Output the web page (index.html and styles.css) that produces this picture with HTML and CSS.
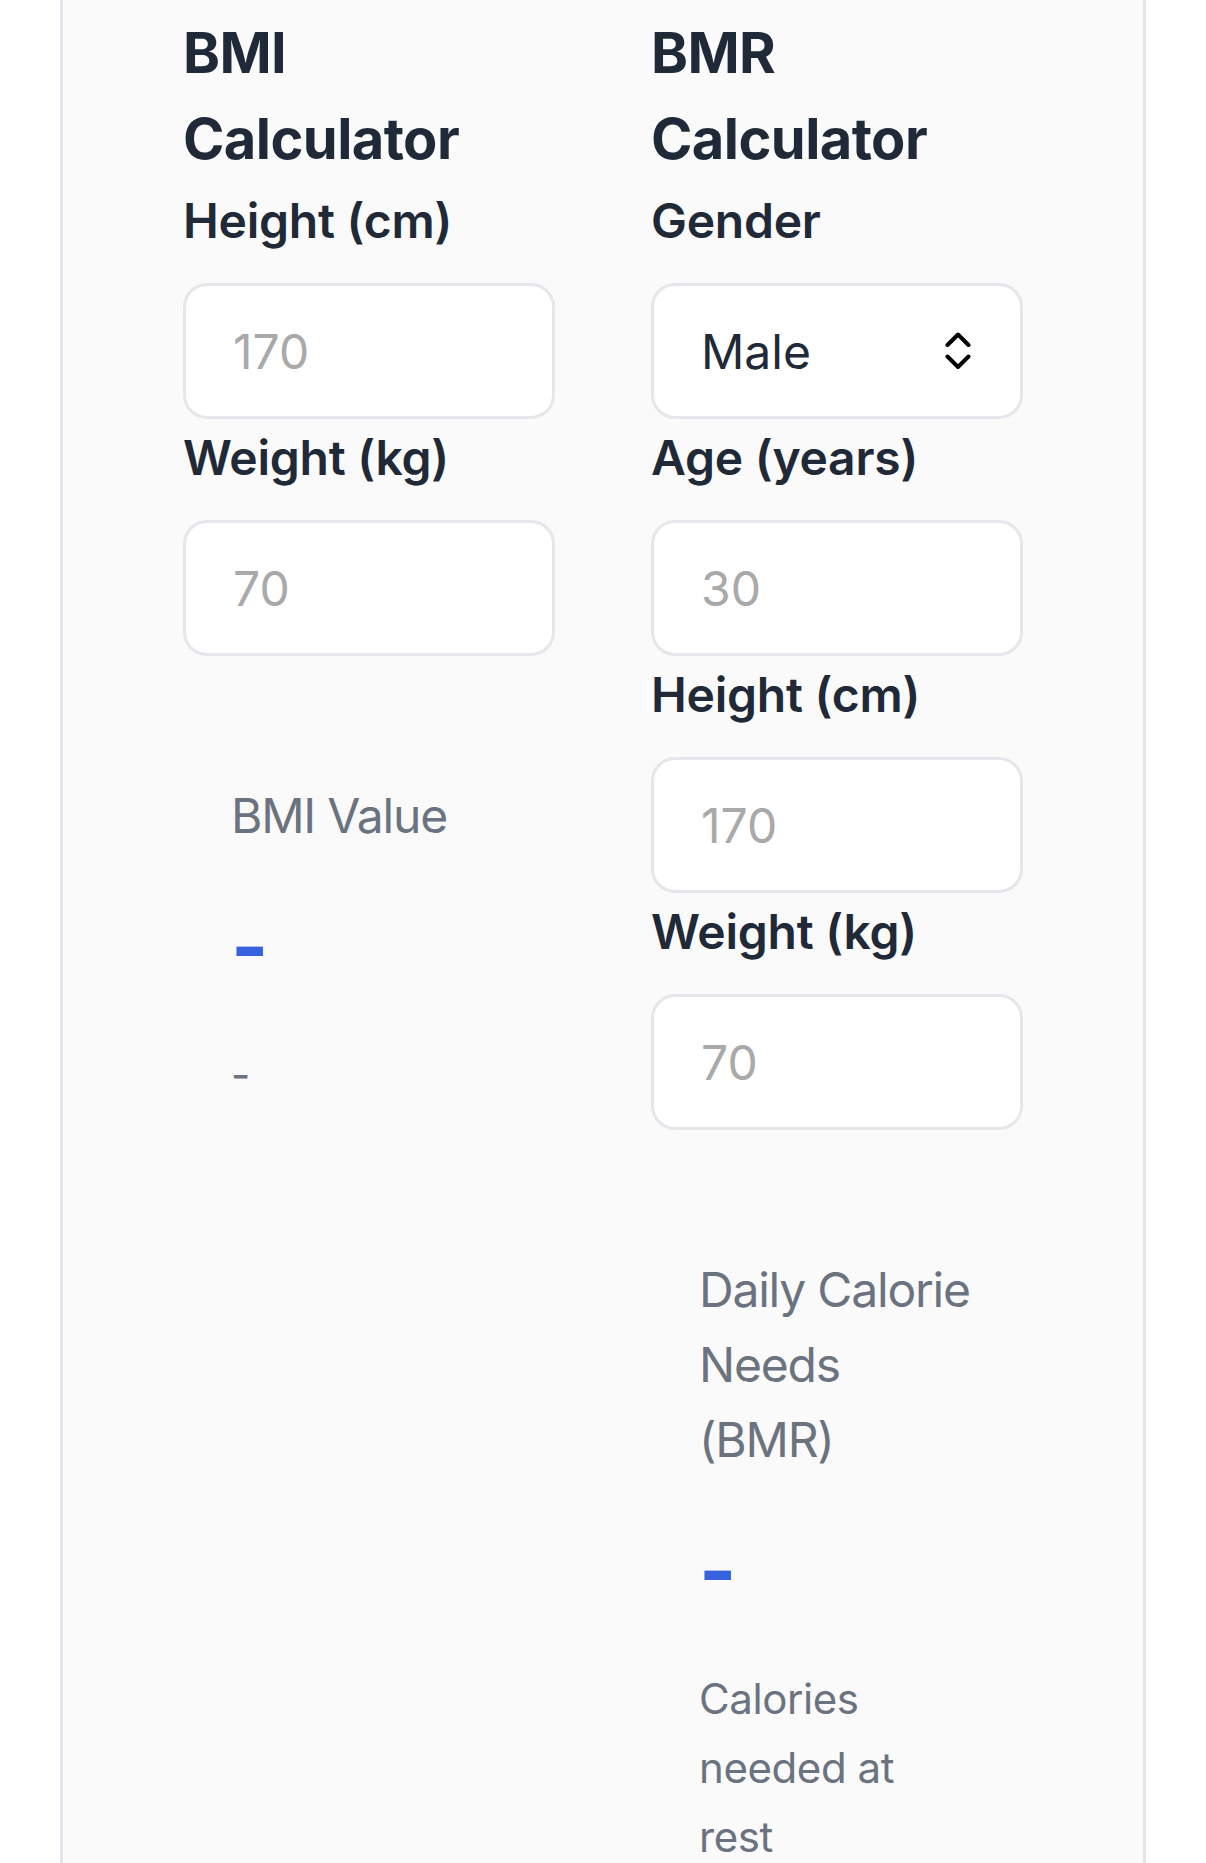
FILE: index.html
```html
<!DOCTYPE html>
<html lang="en">
<head>
<meta charset="utf-8">
<title>Health Calculators</title>
<link rel="stylesheet" href="styles.css">
</head>
<body>
<div class="card">
  <div class="grid">
    <section class="calc">
      <h2 class="title">BMI Calculator</h2>
      <div class="group">
        <label class="label">Height (cm)</label>
        <input class="field" type="text" placeholder="170">
      </div>
      <div class="group">
        <label class="label">Weight (kg)</label>
        <input class="field" type="text" placeholder="70">
      </div>
      <div class="result">
        <div class="result-label">BMI Value</div>
        <div class="result-value">-</div>
        <div class="result-sub">-</div>
      </div>
    </section>
    <section class="calc">
      <h2 class="title">BMR Calculator</h2>
      <div class="group">
        <label class="label">Gender</label>
        <div class="field select">
          <span class="select-text">Male</span>
          <svg class="chevrons" width="26" height="38" viewBox="0 0 26 38" aria-hidden="true">
            <path d="M2.5 13 L13 2.5 L23.5 13" fill="none" stroke="#000" stroke-width="4" stroke-linecap="round" stroke-linejoin="round"/>
            <path d="M2.5 24.5 L13 35 L23.5 24.5" fill="none" stroke="#000" stroke-width="4" stroke-linecap="round" stroke-linejoin="round"/>
          </svg>
        </div>
      </div>
      <div class="group">
        <label class="label">Age (years)</label>
        <input class="field" type="text" placeholder="30">
      </div>
      <div class="group">
        <label class="label">Height (cm)</label>
        <input class="field" type="text" placeholder="170">
      </div>
      <div class="group">
        <label class="label">Weight (kg)</label>
        <input class="field" type="text" placeholder="70">
      </div>
      <div class="result">
        <div class="result-label">Daily Calorie Needs (BMR)</div>
        <div class="result-value">-</div>
        <div class="result-sub">Calories needed at rest</div>
      </div>
    </section>
  </div>
</div>
</body>
</html>
```
FILE: styles.css
```css
html, body {
  margin: 0;
  padding: 0;
  background: #ffffff;
}

body {
  font-family: Inter, "Noto Sans", "Liberation Sans", sans-serif;
  color: #1f2937;
}

.card {
  margin: 0 60px;
  min-height: 1900px;
  background: #fafafa;
  border-left: 3px solid #e4e4ea;
  border-right: 3px solid #e4e4ea;
  padding: 10px 120px 120px;
  box-sizing: border-box;
}

.grid {
  display: grid;
  grid-template-columns: 1fr 1fr;
  column-gap: 96px;
  align-items: start;
}

.calc {
  display: flex;
  flex-direction: column;
  min-width: 0;
}

.title {
  margin: 0;
  font-size: 56px;
  line-height: 86px;
  font-weight: 700;
  letter-spacing: -0.01em;
  color: #1f2937;
}

.group {
  display: flex;
  flex-direction: column;
  margin-top: 3px;
}

.label {
  display: block;
  font-size: 48px;
  line-height: 72px;
  font-weight: 600;
  letter-spacing: -0.005em;
  color: #1f2937;
  margin-bottom: 26px;
}

.field {
  display: block;
  width: 100%;
  height: 136px;
  box-sizing: border-box;
  padding: 0 47px;
  border: 3px solid #e5e7eb;
  border-radius: 24px;
  background: #ffffff;
  font-family: Inter, "Noto Sans", "Liberation Sans", sans-serif;
  font-size: 48px;
  color: #1f2937;
  outline: none;
  margin: 0;
}

.field::placeholder {
  color: #a9a9a9;
  opacity: 1;
}

.select {
  display: flex;
  align-items: center;
  justify-content: space-between;
  padding-right: 49px;
}

.select-text {
  font-size: 48px;
  color: #1f2937;
}

.chevrons {
  display: block;
  flex: none;
}

.result {
  margin-top: 74px;
  padding: 48px;
}

.result-label {
  font-size: 48px;
  line-height: 75px;
  letter-spacing: -0.025em;
  color: #6b7280;
}

.result-value {
  margin-top: 45px;
  font-size: 80px;
  line-height: 96px;
  font-weight: 700;
  color: #3762de;
}

.result-sub {
  margin-top: 46px;
  font-size: 42px;
  line-height: 69px;
  letter-spacing: -0.01em;
  color: #6b7280;
}
```
